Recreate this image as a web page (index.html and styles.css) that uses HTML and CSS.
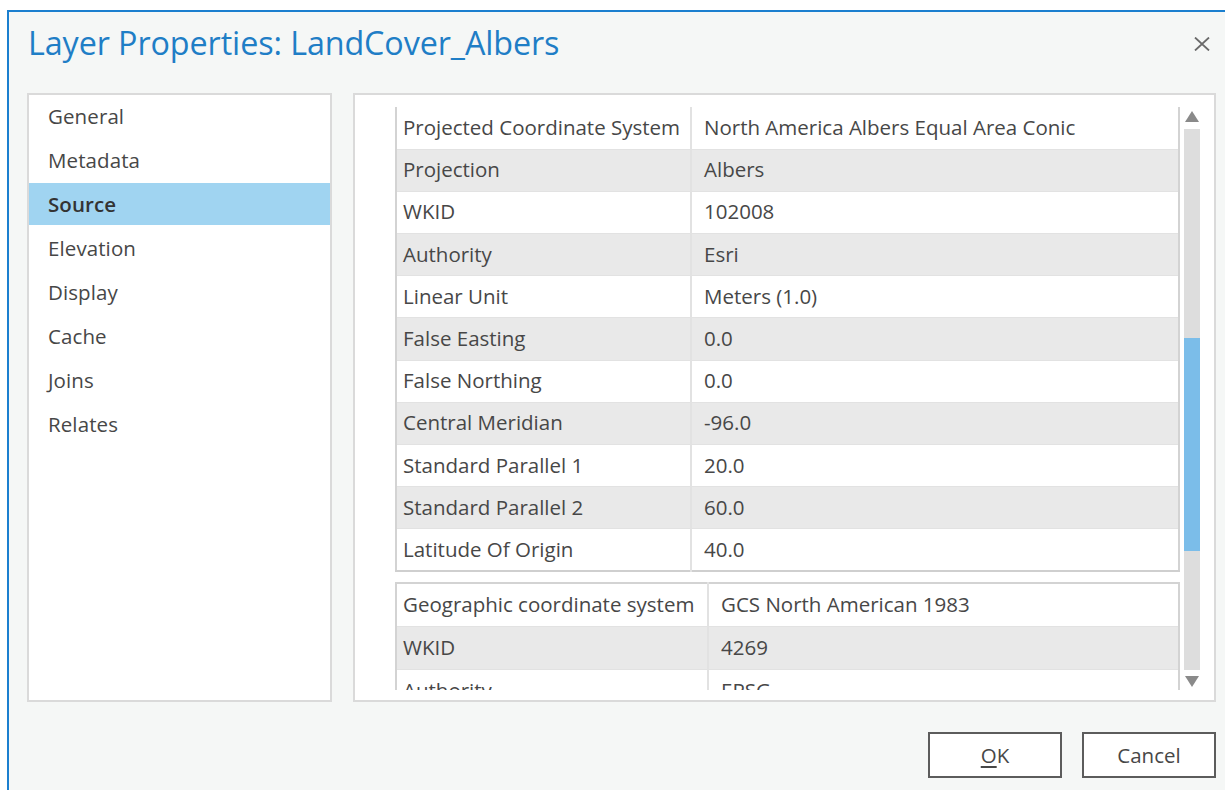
FILE: index.html
```html
<!DOCTYPE html>
<html lang="en">
<head>
<meta charset="utf-8">
<title>Layer Properties: LandCover_Albers</title>
<link rel="stylesheet" href="styles.css">
</head>
<body>
<div class="dialog">
  <header class="dialog-header">
    <h1 class="dialog-title">Layer Properties: LandCover_Albers</h1>
    <button class="close-btn" aria-label="Close">
      <svg width="18" height="14" viewBox="0 0 18 14"><path d="M2 0.5 L16 13.5 M16 0.5 L2 13.5" stroke="#6a6a6a" stroke-width="1.8" fill="none"/></svg>
    </button>
  </header>

  <div class="dialog-body">
    <ul class="nav-list">
      <li class="nav-item">General</li>
      <li class="nav-item">Metadata</li>
      <li class="nav-item is-active">Source</li>
      <li class="nav-item">Elevation</li>
      <li class="nav-item">Display</li>
      <li class="nav-item">Cache</li>
      <li class="nav-item">Joins</li>
      <li class="nav-item">Relates</li>
    </ul>

    <section class="content-panel">
      <div class="scroll-view">
        <table class="prop-table prop-table--proj">
          <tr><td>Projected Coordinate System</td><td>North America Albers Equal Area Conic</td></tr>
          <tr><td>Projection</td><td>Albers</td></tr>
          <tr><td>WKID</td><td>102008</td></tr>
          <tr><td>Authority</td><td>Esri</td></tr>
          <tr><td>Linear Unit</td><td>Meters (1.0)</td></tr>
          <tr><td>False Easting</td><td>0.0</td></tr>
          <tr><td>False Northing</td><td>0.0</td></tr>
          <tr><td>Central Meridian</td><td>-96.0</td></tr>
          <tr><td>Standard Parallel 1</td><td>20.0</td></tr>
          <tr><td>Standard Parallel 2</td><td>60.0</td></tr>
          <tr><td>Latitude Of Origin</td><td>40.0</td></tr>
        </table>
        <table class="prop-table prop-table--geo">
          <tr><td>Geographic coordinate system</td><td>GCS North American 1983</td></tr>
          <tr><td>WKID</td><td>4269</td></tr>
          <tr><td>Authority</td><td>EPSG</td></tr>
          <tr><td>Angular Unit</td><td>Degree (0.0174532925199433)</td></tr>
        </table>
      </div>
      <div class="scrollbar">
        <span class="arrow arrow-up"></span>
        <div class="track"><div class="thumb"></div></div>
        <span class="arrow arrow-down"></span>
      </div>
    </section>
  </div>

  <footer class="dialog-footer">
    <button class="btn"><u>O</u>K</button>
    <button class="btn">Cancel</button>
  </footer>
</div>
</body>
</html>
```
FILE: styles.css
```css
html, body {
  margin: 0;
  padding: 0;
  background: #ffffff;
  overflow: hidden;
  height: 790px;
}

body {
  font-family: "Open Sans", "Noto Sans", sans-serif;
  color: #474747;
}

.dialog {
  box-sizing: border-box;
  margin: 10px 0 0 7px;
  width: 1225px;
  height: 800px;
  background: #f5f7f6;
  border-top: 2px solid #1b7fcf;
  border-left: 2px solid #1b7fcf;
  padding: 0 16px 0 18px;
  display: flex;
  flex-direction: column;
}

.dialog-header {
  height: 81px;
  display: flex;
  align-items: flex-start;
  justify-content: space-between;
}

.dialog-title {
  margin: 8px 0 0 1px;
  font-size: 32.3px;
  font-weight: 400;
  color: #1f7ec6;
  letter-spacing: -0.1px;
  line-height: normal;
}

.close-btn {
  background: none;
  border: 0;
  padding: 0;
  margin: 25px 5px 0 0;
  width: 18px;
  height: 14px;
  display: flex;
}

.dialog-body {
  display: flex;
  gap: 21px;
  height: 609px;
}

.nav-list {
  box-sizing: border-box;
  list-style: none;
  margin: 0;
  padding: 0;
  width: 305px;
  height: 100%;
  background: #ffffff;
  border: 2px solid #dadada;
}

.nav-item {
  height: 44px;
  line-height: 42px;
  padding-left: 19px;
  font-size: 20.5px;
  letter-spacing: 0.1px;
}

.nav-item.is-active {
  background: #a0d4f1;
  font-weight: 600;
  color: #333333;
  height: 42px;
  margin-bottom: 2px;
}

.content-panel {
  box-sizing: border-box;
  flex: 1;
  height: 100%;
  background: #ffffff;
  border: 2px solid #dadada;
  display: flex;
  padding: 12px 14px 12px 40px;
  gap: 4px;
}

.scroll-view {
  flex: 1;
  height: 583px;
  overflow: hidden;
}

.prop-table {
  width: 100%;
  table-layout: fixed;
  border-collapse: collapse;
  font-size: 20.5px;
  border-left: 2px solid #d3d3d3;
  border-right: 2px solid #d3d3d3;
}

.prop-table--proj {
  border-bottom: 2px solid #cfcfcf;
}

.prop-table--geo {
  margin-top: 10px;
  border-top: 2px solid #d3d3d3;
}

.prop-table td {
  padding: 0 6px 2px 6px;
  white-space: nowrap;
  overflow: hidden;
  border-top: 1px solid #e2e2e2;
  border-bottom: 1px solid #e2e2e2;
}

.prop-table td + td {
  padding-left: 12px;
  border-left: 2px solid #e2e2e2;
}

.prop-table--proj tr { height: 42.2px; }
.prop-table--proj tr:first-child td { border-top: 0; }
.prop-table--proj td:first-child { width: 281px; }

.prop-table--geo tr { height: 43px; }
.prop-table--geo td:first-child { width: 298px; }

.prop-table tr:nth-child(even) td {
  background: #e9e9e9;
}

.scrollbar {
  width: 16px;
  display: flex;
  flex-direction: column;
  align-items: center;
  padding-top: 2px;
}

.arrow {
  width: 0;
  height: 0;
  border-left: 7px solid transparent;
  border-right: 7px solid transparent;
}

.arrow-up {
  border-bottom: 11px solid #8a8a8a;
  margin: 2px 0 7px;
}

.arrow-down {
  border-top: 11px solid #8a8a8a;
  margin: 6px 0 0;
}

.track {
  width: 16px;
  height: 541px;
  background: #dddddd;
  position: relative;
}

.thumb {
  position: absolute;
  left: 0;
  top: 209px;
  width: 16px;
  height: 213px;
  background: #7bbde9;
}

.dialog-footer {
  display: flex;
  justify-content: flex-end;
  gap: 20px;
  padding-top: 30px;
}

.btn {
  box-sizing: border-box;
  width: 134px;
  height: 46px;
  background: #ffffff;
  border: 2px solid #5c5c5c;
  font-family: "Open Sans", "Noto Sans", sans-serif;
  font-size: 20.5px;
  color: #474747;
  padding: 0;
}

.btn u {
  text-underline-offset: 3px;
}
```
